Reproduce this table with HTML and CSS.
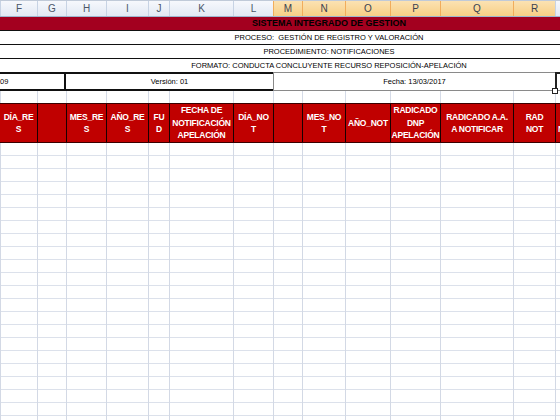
FILE: index.html
```html
<!DOCTYPE html>
<html lang="es">
<head>
<meta charset="utf-8">
<title>Notificaciones</title>
<link rel="stylesheet" href="styles.css">
</head>
<body>
<div class="sheet">
  <div class="colhdr">
    <div class="ch">F</div><div class="ch">G</div><div class="ch">H</div><div class="ch">I</div><div class="ch">J</div><div class="ch">K</div><div class="ch">L</div><div class="ch sel">M</div><div class="ch sel">N</div><div class="ch sel">O</div><div class="ch sel">P</div><div class="ch sel">Q</div><div class="ch sel">R</div><div class="ch"></div>
  </div>
  <div class="title">SISTEMA INTEGRADO DE GESTION</div>
  <div class="band top">PROCESO:&nbsp; GESTIÓN DE REGISTRO Y VALORACIÓN</div>
  <div class="band">PROCEDIMIENTO: NOTIFICACIONES</div>
  <div class="band plain">FORMATO: CONDUCTA CONCLUYENTE RECURSO REPOSICIÓN-APELACIÓN</div>
  <div class="meta">
    <div class="m code">09</div>
    <div class="m version">Versión: 01</div>
    <div class="m fecha">Fecha: 13/03/2017</div>
    <div class="m active"><span class="handle"></span></div>
  </div>
  <div class="gridrow">
    <div></div><div></div><div></div><div></div><div></div><div></div><div></div><div></div><div></div><div></div><div></div><div></div><div></div><div></div>
  </div>
  <div class="hdr">
    <div class="h">DÍA_RE<br>S</div>
    <div class="h"></div>
    <div class="h">MES_RE<br>S</div>
    <div class="h">AÑO_RE<br>S</div>
    <div class="h">FU<br>D</div>
    <div class="h">FECHA DE<br>NOTIFICACIÓN<br>APELACIÓN</div>
    <div class="h">DÍA_NO<br>T</div>
    <div class="h"></div>
    <div class="h">MES_NO<br>T</div>
    <div class="h">AÑO_NOT</div>
    <div class="h">RADICADO<br>DNP<br>APELACIÓN</div>
    <div class="h">RADICADO A.A.<br>A NOTIFICAR</div>
    <div class="h">RAD<br>NOT</div>
    <div class="h cut"><br>N</div>
  </div>
  <div class="data">
    <div></div><div></div><div></div><div></div><div></div><div></div><div></div><div></div><div></div><div></div><div></div><div></div><div></div><div></div>
  </div>
</div>
</body>
</html>
```

FILE: styles.css
```css
* { box-sizing: border-box; }
html, body { margin: 0; padding: 0; background: #fff; overflow: hidden; }
body { width: 560px; height: 420px; font-family: "Liberation Sans", Arial, sans-serif; }

.sheet {
  --cols: 37px 29px 40px 42px 21px 64px 40px 29px 43px 45px 50px 73px 42px 103px;
  width: 658px;
}

.colhdr {
  display: grid;
  grid-template-columns: var(--cols);
  height: 17px;
  border-top: 1px solid #c0cad8;
  border-bottom: 1px solid #9eb6ce;
  background: linear-gradient(#f6f8fc, #e2e9f4);
}
.ch {
  border-left: 1px solid #c7d3e4;
  text-align: center;
  font-size: 10px;
  line-height: 15px;
  color: #4a5668;
}
.ch.sel {
  background: linear-gradient(#fbe2b2, #f7cf86);
  border-left-color: #f1ad5c;
  color: #3a4250;
}

.title {
  height: 13px;
  background: #a3001f;
  color: #000;
  font-weight: bold;
  font-size: 9px;
  line-height: 13px;
  text-align: center;
}

.band {
  height: 14px;
  border-bottom: 1px solid #111;
  font-size: 7.5px;
  line-height: 13px;
  text-align: center;
  color: #000;
}
.band.top { height: 15px; border-top: 1px solid #111; }
.band.plain { height: 13px; border-bottom: 0; }

.meta {
  display: grid;
  grid-template-columns: 66px 207px 282px 103px;
  height: 19px;
}
.m {
  font-size: 7.5px;
  line-height: 15px;
  color: #000;
  text-align: center;
}
.m.code, .m.version {
  border-top: 2px solid #111;
  border-bottom: 2px solid #111;
}
.m.code { border-right: 2px solid #111; text-align: left; }
.m.fecha {
  border: 1px solid #8a8a8a;
  border-right: 0;
  line-height: 17px;
}
.m.active {
  position: relative;
  border-top: 2px solid #222;
  border-left: 2px solid #222;
  border-bottom: 1px solid #8a8a8a;
}
.handle {
  position: absolute;
  left: -5px;
  bottom: -4px;
  width: 6px;
  height: 6px;
  background: #fff;
  border: 1px solid #222;
}

.gridrow {
  display: grid;
  grid-template-columns: var(--cols);
  height: 12px;
}
.gridrow div { border-left: 1px solid #d5dbe7; }

.hdr {
  display: grid;
  grid-template-columns: var(--cols);
  height: 40px;
  background: #c00000;
  border-top: 1px solid #3a0000;
  border-bottom: 1px solid #3a0000;
}
.h {
  border-left: 1px solid #1a0000;
  display: flex;
  align-items: center;
  justify-content: center;
  text-align: center;
  white-space: nowrap;
  color: #fff;
  font-weight: bold;
  font-size: 8.5px;
  letter-spacing: -0.25px;
  line-height: 12.5px;
}
.h:first-child { border-left: 0; }
.h.cut { justify-content: flex-start; text-align: left; padding-left: 2px; }

.data {
  display: grid;
  grid-template-columns: var(--cols);
  height: 290px;
  background: repeating-linear-gradient(to bottom, transparent 0, transparent 12px, #dce1eb 12px, #dce1eb 13px);
}
.data div { border-left: 1px solid #d3d9e5; }
```
